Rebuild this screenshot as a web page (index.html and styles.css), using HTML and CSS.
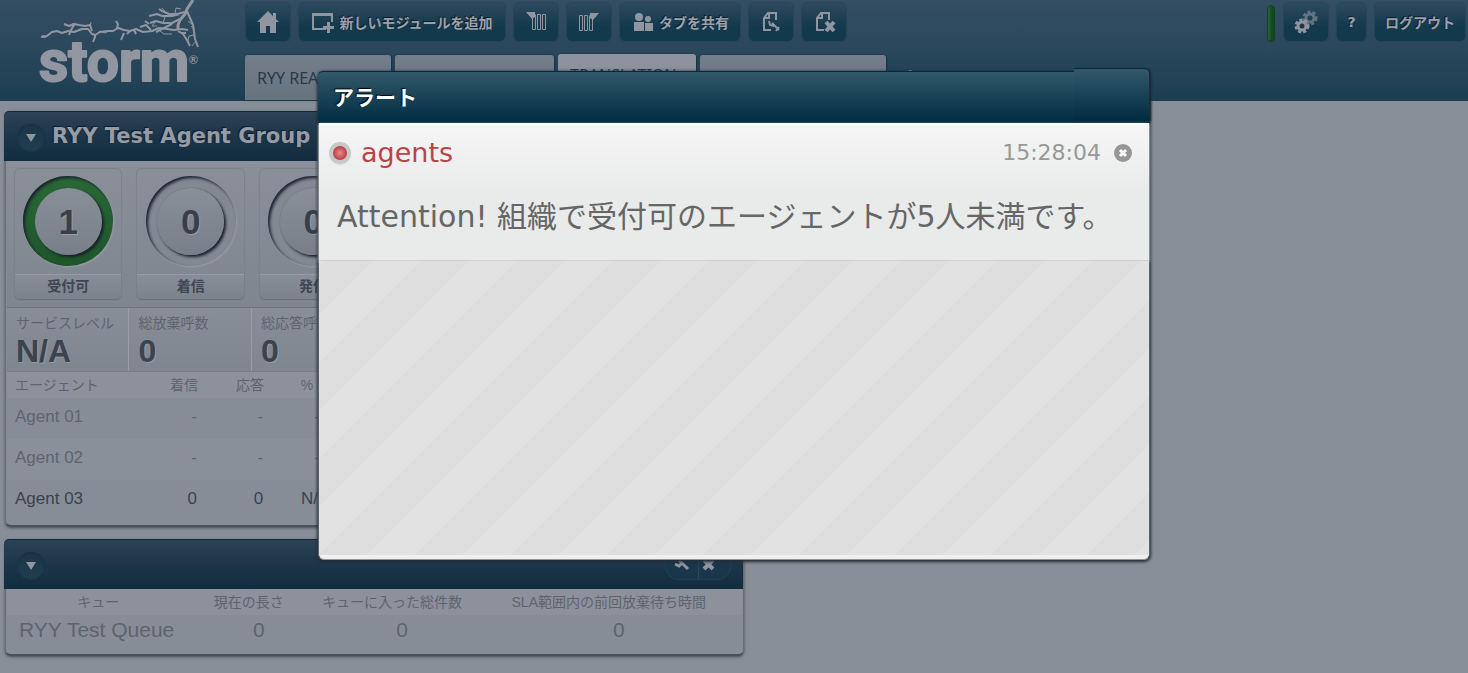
FILE: index.html
```html
<!DOCTYPE html>
<html lang="ja">
<head>
<meta charset="utf-8">
<meta name="viewport" content="width=device-width, initial-scale=1">
<title>storm</title>
<link rel="stylesheet" href="styles.css">
</head>
<body>

<header class="top">
  <a class="logo" href="#" aria-label="storm">
    <svg width="240" height="100" viewBox="0 0 240 100">
      <g class="bolt">
        <path stroke-width="2" d="M41 37l6-1 5-4 5-1 5 2 6-2 6 1 8-3 6 0 4 5 3 1 5-3 7-1 6 0 5-3 6 2 6 1 6-2 7 3 9-1 7-3 8 1 7 1 8-1 6 1"/>
        <path stroke-width="3" d="M193 0l-6 9-2 5-5 6-2 5 0 5"/>
        <path stroke-width="2" d="M187 11l3 7 3 7 1 7 1 7 3 8M185 12l-8 2-8 0-7-3-3-2M180 14l-8 2-10 0-5-2-8 2M180 19l-8 4-9 0-7-2-6 2M172 24l-8 4-8 4M178 31l5 3 4 6 3 6M181 33l5 0"/>
        <path stroke-width="2" d="M46 37l-4-1M69 35l2-5 3-5-2-1M64 24l5 2 5-2 5 1 6 1 5-1 2 6M95 34l0 3-2 5M117 28l1-4-2-3M124 33l-3 7M130 31l-3 3M134 30l2 4M151 30l-5-5-6 2M149 24l-4-3"/>
        <path stroke-width="1" d="M90 27l1-5M99 31l6 2 4-2M167 14l-5-6M175 13l1-5 5 1M193 25l-5-4M195 30l-4-4M194 35l-5 1-1 5M196 41l-4 5M160 31l4 3 8 0M156 21l-4 5 5 0M165 17l-2 6"/>
      </g>
      <text class="word" x="39" y="81">storm</text>
      <text class="reg" x="189" y="64">®</text>
    </svg>
  </a>
  <div class="bars">
    <div class="toolbar">
      <button class="tool" aria-label="ホーム"><svg width="24" height="24" viewBox="0 0 24 24"><path class="fill" d="M12 1L1 12h3v11h6v-7h4v7h6V12h3l-3-3V3h-3v3z"/></svg></button>
      <button class="tool wide"><svg width="24" height="24" viewBox="0 0 24 24"><path class="line" d="M15 19H2V4h19v8"/><path class="fill" d="M1 3h21v3H1zM16 12h3v4h4v3h-4v4h-3v-4h-4v-3h4z"/></svg>新しいモジュールを追加</button>
      <button class="tool" aria-label="列を左に追加"><svg width="24" height="24" viewBox="0 0 24 24"><path class="fill" d="M2 2h9v5L8 9z"/><path class="thin" d="M8.500 6.500V19.500h3V4.500M13.500 4.500h3v15h-3zM18.500 4.500h3v15h-3z"/></svg></button>
      <button class="tool" aria-label="列を右に追加"><svg width="24" height="24" viewBox="0 0 24 24"><path class="fill" d="M13 3h9l-6 7-3-2z"/><path class="thin" d="M2.500 5.500h3v15h-3zM7.500 5.500h3v15h-3zM15.500 8.500v12h-3v-15"/></svg></button>
      <button class="tool share"><svg width="24" height="24" viewBox="0 0 24 24"><circle class="fill" cx="8" cy="7" r="4"/><circle class="fill" cx="17" cy="9" r="3"/><path class="fill" d="M3 12h10v9H3zM14 13h8v8h-8z"/></svg>タブを共有</button>
      <button class="tool" aria-label="タブを編集"><svg width="24" height="24" viewBox="0 0 24 24"><path class="line" d="M12 20H5V8l4-5h8v7M5 8h5V3"/><path class="line" d="M13 13l7 7M10 11l1 4 4 1M20 17l-3 4"/></svg></button>
      <button class="tool" aria-label="タブを削除"><svg width="24" height="24" viewBox="0 0 24 24"><path class="line" d="M12 20H5V8l4-5h8v7M5 8h5V3"/><path class="cross" d="M14 12l8 9M22 12l-8 9"/></svg></button>
      <span class="status"></span>
      <button class="tool" aria-label="設定"><svg width="26" height="26" viewBox="0 0 26 26"><circle class="teeth" cx="9" cy="17" r="6"/><circle class="gear" cx="9" cy="17" r="4"/><g class="dim"><circle class="teeth" cx="17" cy="9" r="6"/><circle class="gear" cx="17" cy="9" r="4"/></g></svg></button>
      <button class="tool help">?</button>
      <button class="tool logout">ログアウト</button>
    </div>
    <nav class="tabs">
      <a class="tab tab-ready" href="#">RYY READY</a>
      <a class="tab tab-second" href="#" aria-label="タブ 2"></a>
      <a class="tab tab-active" href="#">TRANSLATION</a>
      <a class="tab tab-fourth" href="#" aria-label="タブ 4"></a>
      <a class="tab-add" href="#">+</a>
    </nav>
  </div>
</header>

<main class="column">
  <section class="module">
    <div class="module-head">
      <button class="toggle" aria-label="折りたたむ"></button>
      <h2>RYY Test Agent Group</h2>
    </div>
    <div class="gauges">
      <div class="gauge"><div class="ring green"><div class="dial">1</div></div><p>受付可</p></div>
      <div class="gauge"><div class="ring"><div class="dial">0</div></div><p>着信</p></div>
      <div class="gauge"><div class="ring"><div class="dial">0</div></div><p>発信</p></div>
    </div>
    <dl class="stats">
      <div><dt>サービスレベル</dt><dd>N/A</dd></div>
      <div><dt>総放棄呼数</dt><dd>0</dd></div>
      <div><dt>総応答呼数</dt><dd>0</dd></div>
    </dl>
    <table class="agents">
      <thead>
        <tr><th class="name">エージェント</th><th>着信</th><th>応答</th><th class="percent">%</th><th class="rest"></th></tr>
      </thead>
      <tbody>
        <tr><td>Agent 01</td><td>-</td><td>-</td><td class="rate">-</td><td></td></tr>
        <tr><td>Agent 02</td><td>-</td><td>-</td><td class="rate">-</td><td></td></tr>
        <tr class="on"><td>Agent 03</td><td>0</td><td>0</td><td>N/A</td><td></td></tr>
      </tbody>
    </table>
  </section>

  <section class="module">
    <div class="module-head">
      <button class="toggle" aria-label="折りたたむ"></button>
      <div class="actions">
        <button aria-label="編集"><svg width="18" height="18" viewBox="0 0 18 18"><path class="wrench" d="M2 9l4 2 3-3 6 6"/><path class="wrench" d="M6 5l3 3"/></svg></button>
        <button aria-label="閉じる"><svg width="18" height="18" viewBox="0 0 18 18"><path class="cross" d="M5 5l9 9M14 5l-9 9"/></svg></button>
      </div>
    </div>
    <table class="queues">
      <thead>
        <tr><th class="queue">キュー</th><th class="length">現在の長さ</th><th class="total">キューに入った総件数</th><th>SLA範囲内の前回放棄待ち時間</th></tr>
      </thead>
      <tbody>
        <tr><td>RYY Test Queue</td><td>0</td><td>0</td><td>0</td></tr>
      </tbody>
    </table>
  </section>
</main>

<div class="dialog" role="dialog" aria-labelledby="alertTitle">
  <h1 id="alertTitle">アラート</h1>
  <div class="alert">
    <div class="alert-head">
      <span class="lamp"></span>
      <h2>agents</h2>
      <time>15:28:04</time>
      <button class="dismiss" aria-label="閉じる"><svg width="18" height="18" viewBox="0 0 18 18"><path d="M6 6l6 6M12 6l-6 6"/></svg></button>
    </div>
    <p>Attention! 組織で受付可のエージェントが5人未満です。</p>
  </div>
  <div class="stripes"></div>
</div>

</body>
</html>
```

FILE: styles.css
```css
* {
  box-sizing: border-box;
}
body {
  margin: 0;
  min-height: 100vh;
  background: #878e98;
  font-family: "Liberation Sans", "Noto Sans CJK JP", sans-serif;
  color: #5e646e;
}
button {
  margin: 0;
  padding: 0;
  border: 0;
  font-family: inherit;
  cursor: pointer;
}
h1, h2, p, dl, dd {
  margin: 0;
}
a {
  color: inherit;
  text-decoration: none;
}

/* header */
.top {
  display: flex;
  height: 101px;
  background: linear-gradient(#344e62, #2a475b 50%, #1c3e52);
}
.logo {
  flex: none;
  width: 245px;
}
.bolt path {
  fill: none;
  stroke: #9196a1;
  stroke-linejoin: round;
}
.word {
  font: bold 57px Roboto, sans-serif;
  fill: #9196a1;
  stroke: #9196a1;
  stroke-width: 2px;
  stroke-linejoin: round;
}
.reg {
  font: bold 12px "Liberation Sans", sans-serif;
  fill: #9196a1;
}
.bars {
  flex: 1;
  display: flex;
  flex-direction: column;
  justify-content: space-between;
  padding: 3px 3px 1px 1px;
}
.toolbar {
  display: flex;
  gap: 9px;
}
.tool {
  flex: none;
  display: flex;
  align-items: center;
  justify-content: center;
  gap: 4px;
  width: 44px;
  height: 38px;
  border-radius: 5px;
  background: linear-gradient(#2d495d, #13394c 65%);
  box-shadow: 0 0 1px 1px #294457;
  color: #9ba0aa;
  font: bold 14px "DejaVu Sans", "Noto Sans CJK JP", sans-serif;
  text-shadow: -1px -1px 0 #0b1c2c;
  white-space: nowrap;
}
.tool.wide {
  width: 206px;
}
.tool.share {
  width: 120px;
}
.tool.help {
  width: 29px;
}
.tool.logout {
  width: 90px;
}
.fill {
  fill: #9095a0;
}
.line, .thin, .cross, .wrench, .gear, .teeth {
  fill: none;
  stroke: #9095a0;
  stroke-width: 2;
}
.thin {
  stroke-width: 1;
}
.cross {
  stroke-width: 4;
}
.wrench {
  stroke-width: 3;
}
.gear {
  stroke-width: 3;
}
.teeth {
  stroke-width: 3;
  stroke-dasharray: 3 2;
}
.dim {
  opacity: 0.6;
}
.status {
  width: 8px;
  height: 37px;
  margin: 2px 0 0 auto;
  border: 1px solid #173c34;
  border-radius: 4px;
  background: linear-gradient(90deg, #27663b, #15501f 50%, #0f451a);
}

.tabs {
  display: flex;
  align-items: flex-end;
  gap: 4px;
  margin-left: -1px;
}
.tab {
  height: 45px;
  padding: 12px;
  border-radius: 3px 3px 0 0;
  background: linear-gradient(#747e8a, #667480);
  box-shadow: 1px 0 2px #1a2f40;
  color: #283947;
  font: 16px/22px "Noto Sans", "Noto Sans CJK JP", sans-serif;
  overflow: hidden;
}
.tab-ready {
  width: 146px;
}
.tab-second {
  width: 159px;
}
.tab-active {
  width: 138px;
  height: 46px;
  padding-top: 10px;
  background: linear-gradient(#8e929e, #878e98);
}
.tab-fourth {
  width: 186px;
}
.tab-add {
  padding: 0 10px;
  color: #9da1aa;
  font: bold 24px/44px "DejaVu Sans", sans-serif;
}

/* modules */
.column {
  display: flex;
  flex-direction: column;
  gap: 12px;
  width: 51%;
  padding: 10px 5px;
}
.module {
  padding: 0 1px 4px;
  border: 1px solid #666d77;
  border-top: 0;
  border-bottom: 2px solid #4a515b;
  border-radius: 6px;
  background: #878d97;
  box-shadow: 0 1px 3px #454c56;
}
.module-head {
  display: flex;
  align-items: center;
  gap: 7px;
  height: 50px;
  margin: 0 -1px 0 -3px;
  padding: 2px 13px 0;
  border-top: 1px solid #12293a;
  border-radius: 5px 5px 0 0;
  background: linear-gradient(#2c4357, #1d3549 50%, #112c40);
}
.module-head h2 {
  color: #969ba4;
  font: bold 21px/32px "DejaVu Sans", sans-serif;
  padding-bottom: 3px;
  text-shadow: -1px -1px 1px #0c1c2b;
}
.toggle {
  display: flex;
  align-items: center;
  justify-content: center;
  width: 28px;
  height: 28px;
  border-radius: 50%;
  background: linear-gradient(#1b3447, #213e50);
  box-shadow: inset 0 0 2px #102a3b;
}
.toggle::before {
  content: "";
  border: 5px solid transparent;
  border-top: 8px solid #9095a0;
  border-bottom: 0;
}
.actions {
  display: flex;
  margin-left: auto;
  border-radius: 14px;
  background: #19364a;
  box-shadow: 0 0 1px 1px #234053;
}
.actions button {
  width: 32px;
  height: 26px;
  background: none;
}
.actions button + button {
  border-left: 1px solid #2d485b;
  text-align: left;
}

.gauges {
  display: grid;
  grid-template-columns: repeat(6, 1fr);
  padding: 8px 0;
  background: linear-gradient(#8a8f99, #7e8690);
}
.gauge {
  margin: 0 8px;
  border-radius: 5px;
  box-shadow: 0 0 1px 1px #7b828c;
  text-align: center;
}
.ring {
  display: flex;
  align-items: center;
  justify-content: center;
  width: 90px;
  height: 90px;
  margin: 7px auto 8px;
  border-radius: 50%;
  background: #828993;
  box-shadow: inset 2px 2px 3px #1c2331, 1px 1px 2px #979ca5;
}
.ring.green {
  background: linear-gradient(#296936, #1e5529);
}
.dial {
  width: 67px;
  height: 67px;
  border-radius: 50%;
  background: linear-gradient(#898f99, #797f89);
  box-shadow: 2px 2px 3px #171e2b, 0 0 1px #59616b;
  color: #393f4a;
  font-size: 35px;
  font-weight: bold;
  line-height: 67px;
  text-shadow: 1px 1px 0 #979ca5;
}
.gauge p {
  padding-bottom: 2px;
  border-top: 1px solid #959aa3;
  border-radius: 0 0 5px 5px;
  background: linear-gradient(#888e98, #7b828c);
  box-shadow: 0 1px 1px #666e78;
  color: #3f4651;
  font-size: 14px;
  font-weight: bold;
  line-height: 22px;
}
.stats {
  display: grid;
  grid-template-columns: repeat(6, 1fr);
  border-top: 1px solid #6c737d;
  border-bottom: 1px solid #777e88;
  background: linear-gradient(#888e98, #7f8690);
}
.stats div {
  padding: 4px 0 3px 9px;
  border-right: 1px solid #989da6;
}
.stats dt {
  font-size: 14px;
  line-height: 22px;
  white-space: nowrap;
}
.stats dd {
  color: #3c434e;
  font-size: 32px;
  font-weight: bold;
  line-height: 34px;
  text-shadow: 1px 1px 0 #969ba4;
}

table {
  width: 100%;
  border-collapse: collapse;
  table-layout: fixed;
}
th {
  height: 26px;
  padding: 0;
  background: #8c919b;
  font-size: 14px;
  font-weight: normal;
  line-height: 22px;
  white-space: nowrap;
}
.agents th, .agents td {
  text-align: right;
}
.agents th:first-child, .agents td:first-child {
  padding-left: 8px;
  text-align: left;
}
.agents th {
  width: 9%;
}
.agents .name {
  width: 17%;
}
.agents .rest {
  width: auto;
}
.agents .percent {
  padding-right: 17px;
}
.agents td {
  height: 41px;
  padding: 0 1px 4px 0;
  font-size: 17px;
}
.agents .rate {
  padding-right: 10px;
}
.agents tr:nth-child(even) td {
  background: #8a9099;
}
.agents .on {
  color: #3b424d;
}

.queues th {
  padding-right: 16px;
}
.queues .queue {
  width: 27%;
}
.queues .length {
  width: 14%;
}
.queues .total {
  width: 25%;
}
.queues td {
  height: 35px;
  padding: 0 0 6px 4px;
  font-size: 21px;
  text-align: center;
}
.queues td:first-child {
  padding-left: 12px;
  text-align: left;
}

/* alert window, lies over the page */
.dialog {
  position: absolute;
  top: 71px;
  left: 0;
  right: 0;
  max-width: 832px;
  margin: 0 auto;
  border: 1px solid #5c646c;
  border-top: 0;
  border-bottom: 1px solid #8f9696;
  border-radius: 6px;
  background: #eff0f0;
  box-shadow: 0 1px 3px 1px #232d38;
}
.dialog h1 {
  height: 52px;
  margin: 0 -1px;
  padding: 0 15px;
  border-top: 1px solid #022a3c;
  border-radius: 5px 5px 0 0;
  background: linear-gradient(#32596b, #002b40);
  color: #fff;
  font: bold 21px/49px "Noto Sans CJK JP", sans-serif;
  text-shadow: -1px -1px 1px #000;
}
.dialog h1::after {
  content: "";
  position: absolute;
  top: -3px;
  right: 0;
  width: 75px;
  height: 52px;
  border-top: 1px solid #022a3c;
  border-radius: 0 5px 0 0;
  background: linear-gradient(#32596b, #002b40);
  box-shadow: 2px 0 2px #1d2b38;
}
.alert {
  padding: 9px 17px 0 10px;
  height: 138px;
  border-top: 2px solid #fff;
  border-bottom: 1px solid #d0d1d1;
  background: linear-gradient(#f5f5f5, #e9ebea 50%);
  box-shadow: 0 1px 3px #ccc;
}
.alert-head {
  display: flex;
  align-items: center;
  height: 38px;
}
.lamp {
  width: 22px;
  height: 22px;
  border: 4px solid #c8c8c8;
  border-radius: 50%;
  background: radial-gradient(#e88c8c, #c4484b 60%, #8e2a2c);
  box-shadow: 0 1px 1px #ddd;
}
.alert-head h2 {
  margin: 0 auto 0 10px;
  color: #b94347;
  font: 27px/34px "DejaVu Sans", sans-serif;
}
.alert-head time {
  color: #989898;
  font: 22px/34px "DejaVu Sans", sans-serif;
}
.dismiss {
  display: flex;
  width: 18px;
  height: 18px;
  margin-left: 13px;
  border-radius: 50%;
  background: #969696;
}
.dismiss path {
  stroke: #fff;
  stroke-width: 3;
}
.alert p {
  padding: 20px 0 0 8px;
  color: #666;
  font: 30px/50px "DejaVu Sans", "Noto Sans CJK JP", sans-serif;
}
.stripes {
  height: 294px;
  margin-bottom: 4px;
  background: linear-gradient(135deg, #dedede 25%, #e2e2e2 25%, #e2e2e2 50%, #dedede 50%, #dedede 75%, #e2e2e2 75%) 6px 0 / 96px 96px;
}
```
